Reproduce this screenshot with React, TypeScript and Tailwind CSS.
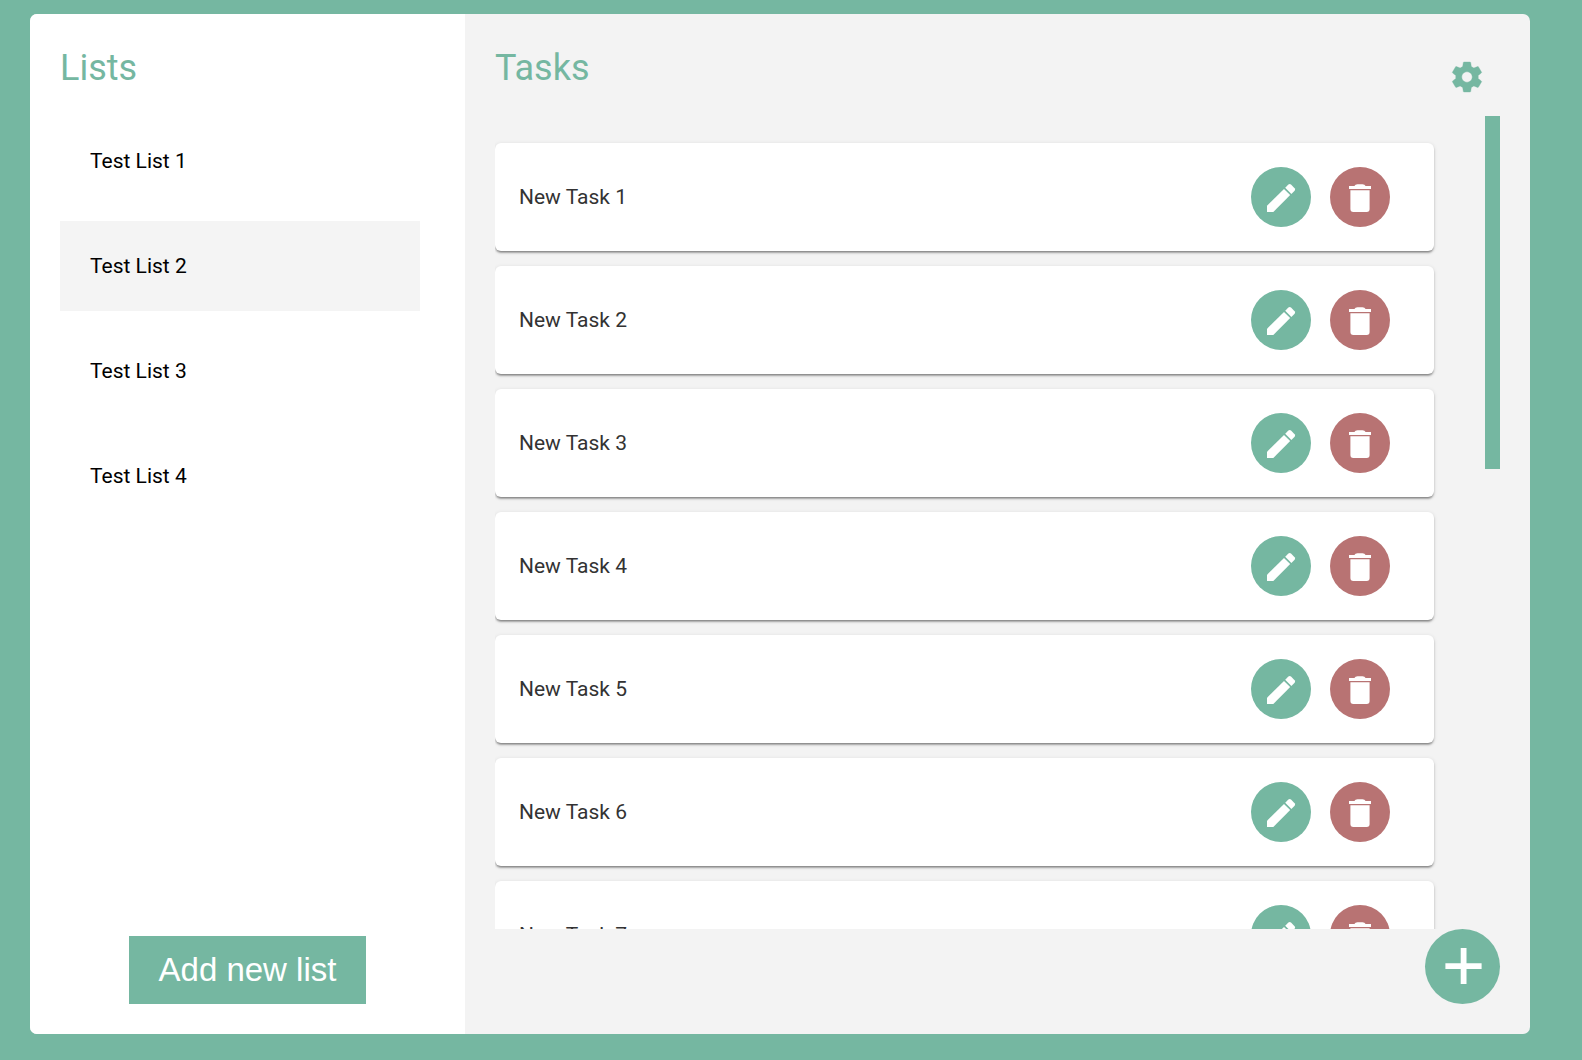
import type { ReactNode } from "react";

const lists = ["Test List 1", "Test List 2", "Test List 3", "Test List 4"];
const selectedList = "Test List 2";

const tasks = [
  "New Task 1",
  "New Task 2",
  "New Task 3",
  "New Task 4",
  "New Task 5",
  "New Task 6",
  "New Task 7",
];

function GearIcon() {
  return (
    <svg
      viewBox="0 0 24 24"
      className="size-9"
      fill="currentColor"
      stroke="currentColor"
      strokeWidth={0.25}
      aria-hidden="true"
    >
      <path d="M19.43 12.98c.04-.32.07-.64.07-.98s-.03-.66-.07-.98l2.11-1.65c.19-.15.24-.42.12-.64l-2-3.46c-.12-.22-.39-.3-.61-.22l-2.49 1c-.52-.4-1.08-.73-1.69-.98l-.38-2.65C14.46 2.18 14.25 2 14 2h-4c-.25 0-.46.18-.49.42l-.38 2.65c-.61.25-1.17.59-1.69.98l-2.49-1c-.23-.09-.49 0-.61.22l-2 3.46c-.13.22-.07.49.12.64l2.11 1.65c-.04.32-.07.65-.07.98s.03.66.07.98l-2.11 1.65c-.19.15-.24.42-.12.64l2 3.46c.12.22.39.3.61.22l2.49-1c.52.4 1.08.73 1.69.98l.38 2.65c.03.24.24.42.49.42h4c.25 0 .46-.18.49-.42l.38-2.65c.61-.25 1.17-.59 1.69-.98l2.49 1c.23.09.49 0 .61-.22l2-3.46c.12-.22.07-.49-.12-.64l-2.11-1.65zM12 15.5c-1.93 0-3.5-1.57-3.5-3.5s1.57-3.5 3.5-3.5 3.5 1.57 3.5 3.5-1.57 3.5-3.5 3.5z" />
    </svg>
  );
}

function PencilIcon() {
  return (
    <svg viewBox="0 0 60 60" className="size-full" fill="currentColor" aria-hidden="true">
      <path d="M16 45V38.8L33 21.9L39.2 28.1L22.3 45Z" />
      <path d="M34.2 20.8L37.4 17.6Q38.7 16.4 40 17.6L43.6 21.2Q44.7 22.5 43.6 23.7L40.4 26.9Z" />
    </svg>
  );
}

function TrashIcon() {
  return (
    <svg viewBox="0 0 60 60" className="size-full" fill="currentColor" aria-hidden="true">
      <path d="M19 19H24.4Q25.2 17.2 27.5 17.2H32.5Q34.8 17.2 35.6 19H41V22H19Z" />
      <path d="M20.4 23.2H39.6V42Q39.6 45 36.6 45H23.4Q20.4 45 20.4 42Z" />
    </svg>
  );
}

function PlusIcon() {
  return (
    <svg viewBox="0 0 75 75" className="size-full" fill="currentColor" aria-hidden="true">
      <path d="M35.7 19H41.5V34.2H56.6V40H41.5V55H35.7V40H20.4V34.2H35.7Z" />
    </svg>
  );
}

function ListItem({ name, selected }: { name: string; selected: boolean }) {
  return (
    <li>
      <button
        type="button"
        aria-pressed={selected}
        className={`flex h-[90px] w-full items-center px-[30px] pt-0.5 text-left text-[21px] text-black ${
          selected ? "bg-[#f4f4f4]" : "bg-white"
        }`}
      >
        {name}
      </button>
    </li>
  );
}

function RoundButton({ label, color, children }: { label: string; color: string; children: ReactNode }) {
  return (
    <button
      type="button"
      aria-label={label}
      className={`size-[60px] shrink-0 rounded-full text-white ${color}`}
    >
      {children}
    </button>
  );
}

function TaskCard({ name }: { name: string }) {
  return (
    <li className="flex h-[108px] shrink-0 items-center gap-[19px] rounded-md bg-white pr-11 pl-6 shadow-[0_3px_2px_-2px_rgba(0,0,0,0.25),0_2px_2px_0_rgba(0,0,0,0.22),0_1px_4px_0_rgba(0,0,0,0.12)]">
      <span className="flex-1 pt-0.5 text-[21px] text-[#333333]">{name}</span>
      <RoundButton label={`Edit ${name}`} color="bg-[#75b7a1]">
        <PencilIcon />
      </RoundButton>
      <RoundButton label={`Delete ${name}`} color="bg-[#b87373]">
        <TrashIcon />
      </RoundButton>
    </li>
  );
}

export default function App() {
  return (
    <div className="h-screen bg-[#75b7a1] pt-3.5 pr-[52px] pb-[26px] pl-[30px] font-['Roboto',sans-serif]">
      <div className="flex h-full overflow-hidden rounded-[7px] bg-[#f3f3f3]">
        <aside className="flex w-[29%] flex-col items-center bg-white p-[30px]">
          <h1 className="w-full text-[36px] leading-[48px] text-[#75b7a1]">Lists</h1>
          <ul className="mt-6 flex w-full flex-1 flex-col gap-[15px] pr-[15px]">
            {lists.map((name) => (
              <ListItem key={name} name={name} selected={name === selectedList} />
            ))}
          </ul>
          <button
            type="button"
            className="h-[68px] bg-[#75b7a1] px-[30px] font-['Liberation_Sans',Arial,sans-serif] text-[33px] text-white"
          >
            Add new list
          </button>
        </aside>

        <main className="flex min-w-0 flex-1 flex-col p-[30px]">
          <header className="flex h-[72px] items-start justify-between pr-[15px]">
            <h1 className="text-[36px] leading-[48px] text-[#75b7a1]">Tasks</h1>
            <button type="button" aria-label="Settings" className="mt-[15px] text-[#75b7a1]">
              <GearIcon />
            </button>
          </header>
          <div className="flex min-h-0 flex-1 justify-between overflow-hidden">
            <ul className="flex flex-1 flex-col gap-[15px] pt-[27px]">
              {tasks.map((name) => (
                <TaskCard key={name} name={name} />
              ))}
            </ul>
            <div aria-hidden="true" className="ml-[51px] h-[353px] w-[15px] bg-[#75b7a1]" />
          </div>
          <button
            type="button"
            aria-label="Add task"
            className="size-[75px] self-end rounded-full bg-[#75b7a1] text-white"
          >
            <PlusIcon />
          </button>
        </main>
      </div>
    </div>
  );
}
